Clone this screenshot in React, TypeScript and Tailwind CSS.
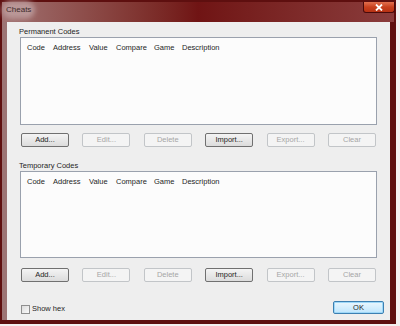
const columns = [
  { name: "Code", w: "w-[26px]" },
  { name: "Address", w: "w-[36px]" },
  { name: "Value", w: "w-[27px]" },
  { name: "Compare", w: "w-[38px]" },
  { name: "Game", w: "w-[28px]" },
  { name: "Description", w: "flex-1" },
];

const buttons = [
  { label: "Add...", enabled: true },
  { label: "Edit...", enabled: false },
  { label: "Delete", enabled: false },
  { label: "Import...", enabled: true },
  { label: "Export...", enabled: false },
  { label: "Clear", enabled: false },
];

const CodeList = ({ height }: { height: string }) => (
  <div className={`ml-[1px] w-[357px] ${height} border border-[#9aa1ad] bg-[#fcfcfc]`}>
    <div className="flex h-[19px] items-center pl-[1px]">
      {columns.map((c) => (
        <div key={c.name} className={`${c.w} pl-[5px] text-[#1e1e1e]`}>
          {c.name}
        </div>
      ))}
    </div>
  </div>
);

const ButtonRow = ({ top }: { top: string }) => (
  <div className={`${top} ml-[2px] flex w-[355px] justify-between`}>
    {buttons.map((b) => (
      <div
        key={b.label}
        className={`flex h-[14px] w-[48px] items-center justify-center rounded-[2px] border ${
          b.enabled
            ? "border-[#707070] bg-linear-to-b from-[#f4f4f4] to-[#dcdcdc] text-[#1e1e1e]"
            : "border-[#c2c5c8] bg-[#f4f4f4] text-[#a6a6a6]"
        }`}
      >
        {b.label}
      </div>
    ))}
  </div>
);

const App = () => {
  return (
    <div className="h-[326px] w-[400px] bg-[#f4f0f0] font-['Liberation_Sans',Arial,sans-serif] text-[7.5px] leading-[10px]">
      <div className="flex h-[324px] w-[396px] flex-col bg-[#5e0f0f] p-[2px] pb-[4px]">
        {/* title bar */}
        <div className="flex h-[20px] items-start justify-between bg-linear-to-r from-[#a07272] via-[#701414] to-[#8a3c3c]">
          <div className="ml-[4px] mt-[3px] rounded-full bg-[#b99696] text-[8px] leading-[10px] text-[#3b2b2b] shadow-[0_0_5px_4px_#b99696]">
            Cheats
          </div>
          <div className="-mr-[1px] flex h-[11px] w-[32px] items-center justify-center rounded-b-[3px] border border-t-0 border-[#4a0a0a] bg-linear-to-b from-[#e2704e] via-[#c8401e] to-[#b83214]">
            <svg width="8" height="7" viewBox="0 0 8 7">
              <path d="M1 0.5 L7 6.5 M7 0.5 L1 6.5" stroke="#ffffff" strokeWidth="1.8" />
            </svg>
          </div>
        </div>

        {/* body */}
        <div className="flex flex-1 pr-[4px]">
          <div className="w-[5px] bg-[#9c7474]" />
          <div className="flex flex-1 flex-col bg-[#eeeeee] pl-[12px] pt-[5px]">
            <p className="h-[10px] text-[#1e1e1e]">Permanent Codes</p>
            <CodeList height="h-[88px]" />
            <ButtonRow top="mt-[8px]" />

            <p className="mt-[14px] h-[10px] text-[#1e1e1e]">Temporary Codes</p>
            <CodeList height="h-[87px]" />
            <ButtonRow top="mt-[10px]" />

            <div className="mt-auto mb-[6px] flex items-end justify-between pr-[6px]">
              <div className="ml-[2px] flex items-center gap-[2px]">
                <div className="h-[9px] w-[9px] border border-[#8f8f8f] bg-linear-to-br from-[#dcdcdc] to-[#fafafa]" />
                <span className="text-[#1e1e1e]">Show hex</span>
              </div>
              <div className="flex h-[13px] w-[51px] items-center justify-center rounded-[2px] border border-[#3c7fb1] bg-linear-to-b from-[#eaf6fd] to-[#bee6fd] text-[#1e1e1e] shadow-[inset_0_0_0_1px_#9ed8f8]">
                OK
              </div>
            </div>
          </div>
        </div>
      </div>
    </div>
  );
};

export default App;
